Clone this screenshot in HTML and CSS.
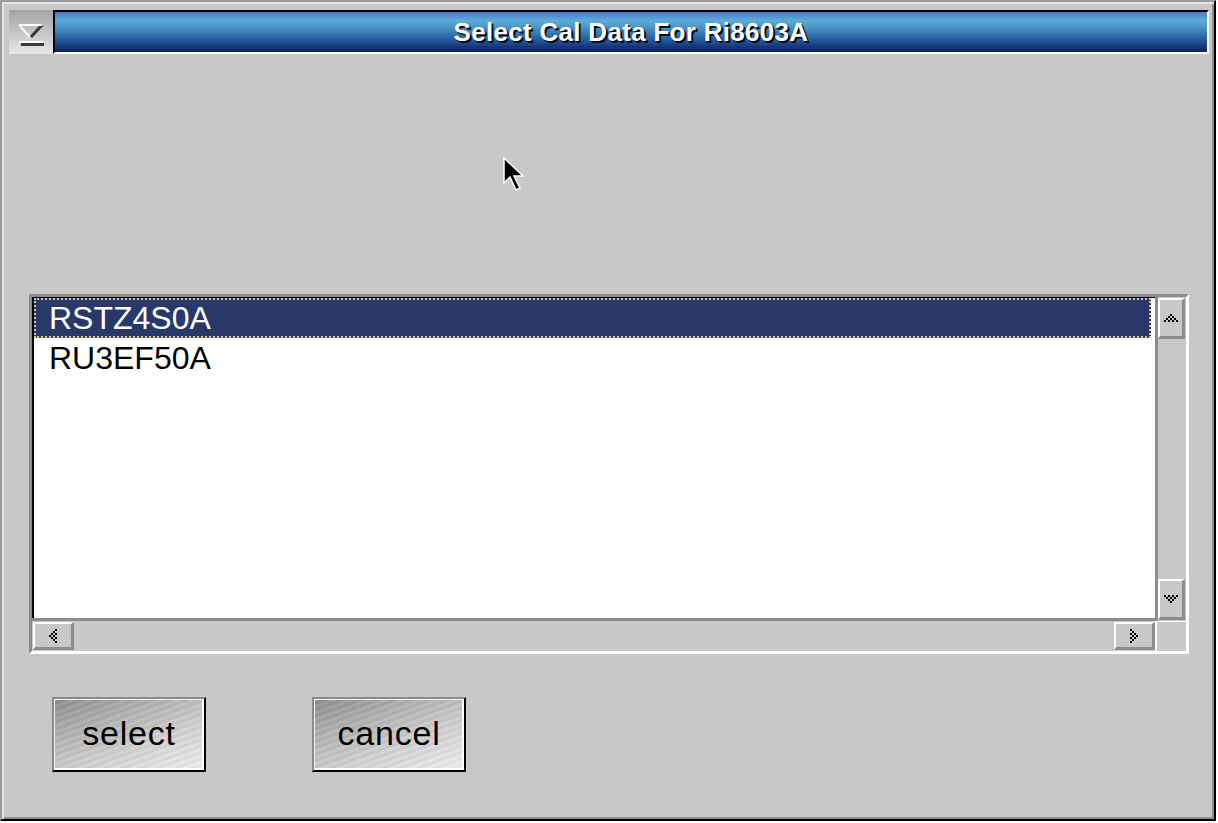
FILE: index.html
```html
<!DOCTYPE html>
<html lang="en">
<head>
    <meta charset="UTF-8">
    <title>Select Cal Data For Ri8603A</title>
    <link rel="stylesheet" href="styles.css">
</head>
<body>
    <div class="window">
        <div class="title-row">
            <div class="menu-btn">
                <svg width="44" height="40" viewBox="0 0 44 40">
                    <line x1="10" y1="13" x2="21" y2="25" stroke="#fff" stroke-width="2"/>
                    <line x1="33" y1="13" x2="22" y2="25" stroke="#383838" stroke-width="3"/>
                    <rect x="10" y="12" width="23" height="2" fill="#fff"/>
                    <rect x="10" y="29" width="24" height="2" fill="#fff"/>
                    <rect x="12" y="31" width="23" height="3" fill="#383838"/>
                </svg>
            </div>
            <div class="title-bar">Select Cal Data For Ri8603A</div>
        </div>

        <div class="list-frame">
            <div class="list-col">
                <div class="list">
                    <div class="row selected">RSTZ4S0A</div>
                    <div class="row">RU3EF50A</div>
                </div>
                <div class="hscroll">
                    <div class="sbtn wide">
                        <svg width="8" height="14" viewBox="0 0 8 14">
                            <rect x="0" y="6" width="2" height="2"/>
                            <rect x="2" y="4" width="2" height="2"/><rect x="2" y="8" width="2" height="2"/>
                            <rect x="4" y="2" width="2" height="2"/><rect x="4" y="6" width="2" height="2"/><rect x="4" y="10" width="2" height="2"/>
                            <rect x="6" y="0" width="2" height="2"/><rect x="6" y="4" width="2" height="2"/><rect x="6" y="8" width="2" height="2"/><rect x="6" y="12" width="2" height="2"/>
                        </svg>
                    </div>
                    <div class="sbtn wide">
                        <svg width="8" height="14" viewBox="0 0 8 14">
                            <rect x="0" y="0" width="2" height="2"/><rect x="0" y="4" width="2" height="2"/><rect x="0" y="8" width="2" height="2"/><rect x="0" y="12" width="2" height="2"/>
                            <rect x="2" y="2" width="2" height="2"/><rect x="2" y="6" width="2" height="2"/><rect x="2" y="10" width="2" height="2"/>
                            <rect x="4" y="4" width="2" height="2"/><rect x="4" y="8" width="2" height="2"/>
                            <rect x="6" y="6" width="2" height="2"/>
                        </svg>
                    </div>
                </div>
            </div>
            <div class="scroll-col">
                <div class="vscroll">
                    <div class="sbtn tall">
                        <svg width="14" height="8" viewBox="0 0 14 8">
                            <rect x="6" y="0" width="2" height="2"/>
                            <rect x="4" y="2" width="2" height="2"/><rect x="8" y="2" width="2" height="2"/>
                            <rect x="2" y="4" width="2" height="2"/><rect x="6" y="4" width="2" height="2"/><rect x="10" y="4" width="2" height="2"/>
                            <rect x="0" y="6" width="2" height="2"/><rect x="4" y="6" width="2" height="2"/><rect x="8" y="6" width="2" height="2"/><rect x="12" y="6" width="2" height="2"/>
                        </svg>
                    </div>
                    <div class="sbtn tall">
                        <svg width="14" height="8" viewBox="0 0 14 8">
                            <rect x="0" y="0" width="2" height="2"/><rect x="4" y="0" width="2" height="2"/><rect x="8" y="0" width="2" height="2"/><rect x="12" y="0" width="2" height="2"/>
                            <rect x="2" y="2" width="2" height="2"/><rect x="6" y="2" width="2" height="2"/><rect x="10" y="2" width="2" height="2"/>
                            <rect x="4" y="4" width="2" height="2"/><rect x="8" y="4" width="2" height="2"/>
                            <rect x="6" y="6" width="2" height="2"/>
                        </svg>
                    </div>
                </div>
                <div class="corner"></div>
            </div>
        </div>

        <div class="actions">
            <button class="push">select</button>
            <button class="push">cancel</button>
        </div>
    </div>

    <svg class="cursor" width="26" height="38" viewBox="0 0 26 38">
        <path d="M2 1 L2 26 L8 20 L14 33 L18 31 L12 19 L21 19 Z" fill="#000" stroke="#fff" stroke-width="1.5" stroke-linejoin="miter"/>
    </svg>
</body>
</html>
```

FILE: styles.css
```css
body {
    margin: 0;
    background: #fff;
    font-family: "Liberation Sans", Arial, sans-serif;
}
.window {
    width: 1216px;
    height: 821px;
    box-sizing: border-box;
    background: #c8c8c8;
    border: 2px solid;
    border-color: #9c9c9c #000 #000 #9c9c9c;
    box-shadow: inset 2px 2px 0 #e4e4e4, inset -2px -2px 0 #8c8c8c;
    padding: 8px 5px 0 7px;
}
.title-row {
    display: flex;
    height: 44px;
}
.menu-btn {
    width: 44px;
    height: 44px;
    box-sizing: border-box;
    padding-top: 2px;
    background: linear-gradient(to bottom, #a4a4a4, #c8c8c8 55%, #e8e8e8);
}
.menu-btn svg {
    display: block;
}
.title-bar {
    flex: 1;
    border-style: solid;
    border-width: 2px;
    border-color: #000 #fff #fff #000;
    background: linear-gradient(to bottom, #5078cc 0%, #5aaed8 22%, #4a95c4 38%, #3575ad 55%, #22559a 72%, #143476 88%, #0d2260 100%);
    color: #fff;
    font-weight: bold;
    font-size: 26px;
    letter-spacing: 0.3px;
    line-height: 40px;
    text-align: center;
    text-shadow: 1px 1px 0 #000, 2px 2px 0 #0a1030;
}

/* list box */
.list-frame {
    display: flex;
    width: 1160px;
    height: 360px;
    box-sizing: border-box;
    margin: 240px 0 0 20px;
    border: 3px solid;
    border-color: #8c8c8c #fff #fff #8c8c8c;
}
.list-col {
    width: 1123px;
    display: flex;
    flex-direction: column;
}
.list {
    flex: 1;
    background: #fff;
    border-top: 1px solid #000;
    border-left: 2px solid #000;
}
.row {
    height: 40px;
    line-height: 40px;
    padding-left: 15px;
    font-size: 32px;
    color: #000;
}
.row.selected {
    margin-right: 4px;
    background: #283868;
    color: #fff;
    outline: 2px dotted #d8c88c;
    outline-offset: -2px;
}
.hscroll {
    height: 33px;
    box-sizing: border-box;
    border-top: 3px solid #8c8c8c;
    padding: 1px 0 1px 1px;
    display: flex;
    justify-content: space-between;
}
.scroll-col {
    width: 31px;
    display: flex;
    flex-direction: column;
}
.vscroll {
    height: 324px;
    box-sizing: border-box;
    border-left: 3px solid #8c8c8c;
    padding: 1px 1px 1px 0;
    display: flex;
    flex-direction: column;
    justify-content: space-between;
}
.corner {
    flex: 1;
    border-top: 1px solid #fff;
    border-left: 2px solid #fff;
}
.sbtn {
    box-sizing: border-box;
    background: #c8c8c8;
    border-style: solid;
    border-width: 2px 3px 3px 2px;
    border-color: #fff #8c8c8c #8c8c8c #fff;
    display: flex;
    align-items: center;
    justify-content: center;
}
.sbtn svg {
    fill: #000;
}
.sbtn.wide {
    width: 41px;
    height: 28px;
}
.sbtn.tall {
    width: 27px;
    height: 41px;
}

/* push buttons */
.actions {
    display: flex;
    gap: 106px;
    margin: 43px 0 0 43px;
}
.push {
    width: 154px;
    height: 75px;
    box-sizing: border-box;
    border: 2px solid;
    border-color: #8a8a8a #000 #000 #8a8a8a;
    box-shadow: inset 1px 1px 0 #f4f4f4, inset -2px -2px 0 #fff;
    background:
        repeating-linear-gradient(160deg, rgba(255,255,255,0.06) 0 3px, rgba(0,0,0,0.035) 3px 6px),
        linear-gradient(160deg, #8e8e8e 0%, #b0b0b0 30%, #cfcfcf 60%, #f0f0f0 100%);
    font-family: "Liberation Sans", Arial, sans-serif;
    font-size: 34px;
    letter-spacing: 0.8px;
    color: #000;
    padding: 0 0 2px;
}

.cursor {
    position: absolute;
    left: 502px;
    top: 157px;
}
```
